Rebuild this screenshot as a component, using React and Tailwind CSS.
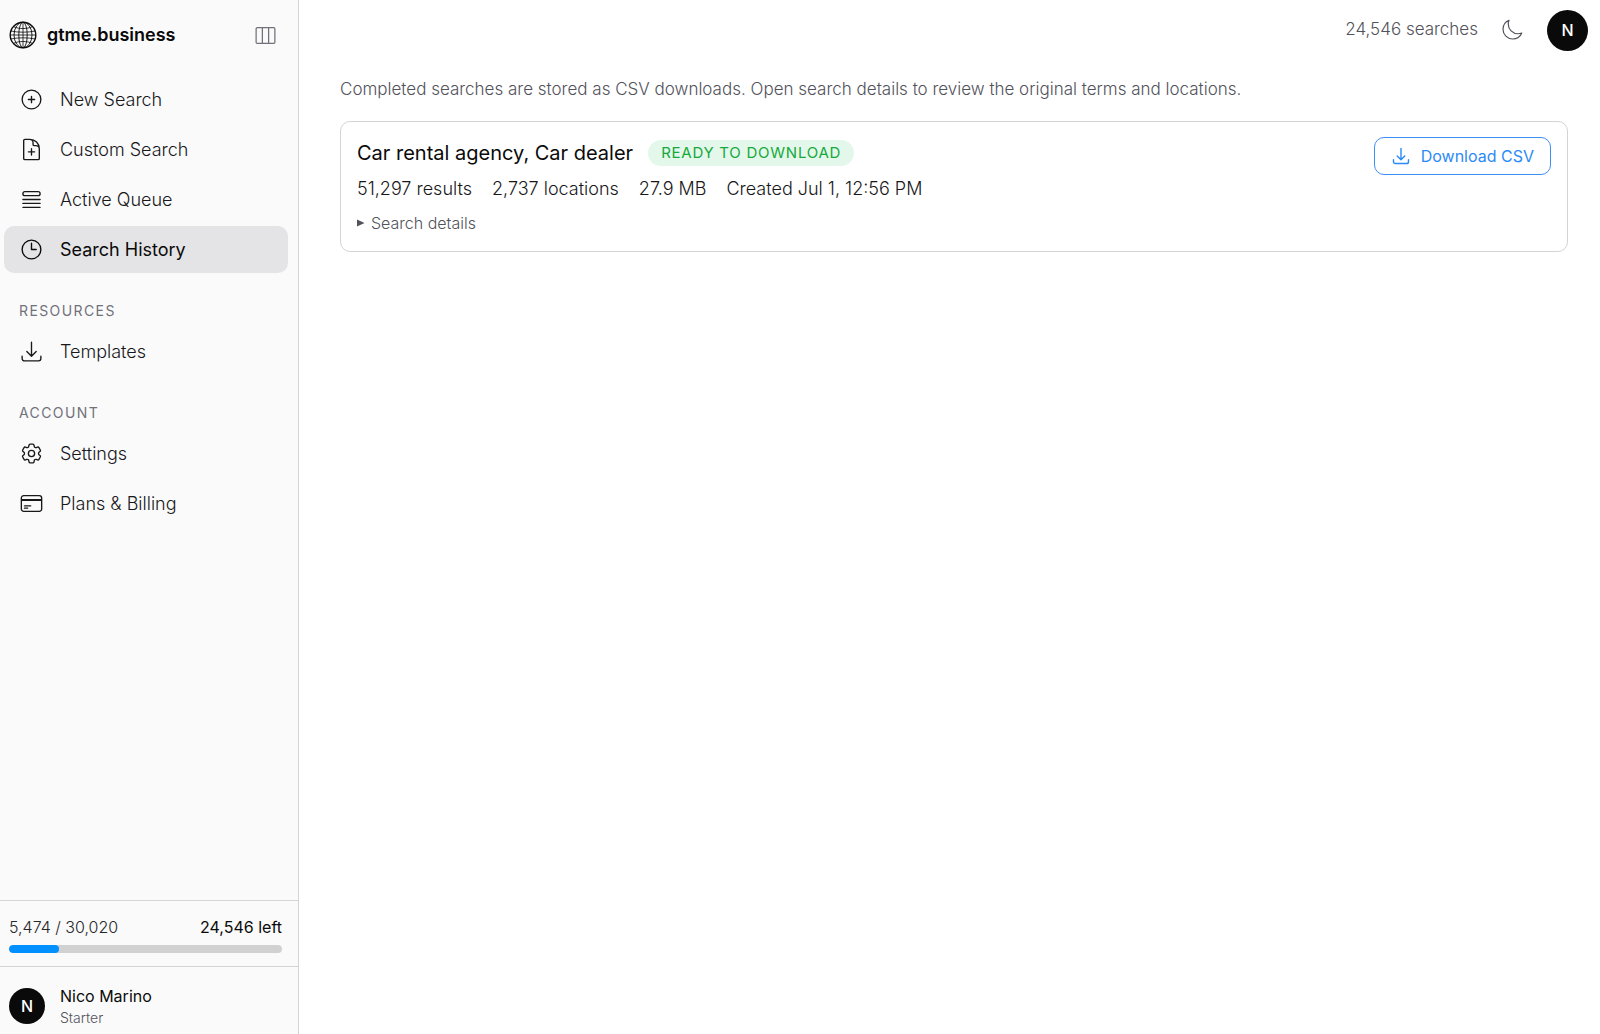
import { useState } from 'react'
import {
  HiOutlineArrowDownTray,
  HiOutlineClock,
  HiOutlineCog6Tooth,
  HiOutlineCreditCard,
  HiOutlineDocumentPlus,
  HiOutlineMoon,
  HiOutlinePlusCircle,
  HiOutlineQueueList,
  HiOutlineViewColumns,
} from 'react-icons/hi2'

const mainLinks = [
  { label: 'New Search', icon: HiOutlinePlusCircle },
  { label: 'Custom Search', icon: HiOutlineDocumentPlus },
  { label: 'Active Queue', icon: HiOutlineQueueList },
  { label: 'Search History', icon: HiOutlineClock },
]

const sections = [
  { title: 'Resources', links: [{ label: 'Templates', icon: HiOutlineArrowDownTray }] },
  {
    title: 'Account',
    links: [
      { label: 'Settings', icon: HiOutlineCog6Tooth },
      { label: 'Plans & Billing', icon: HiOutlineCreditCard },
    ],
  },
]

const usage = { used: 5474, total: 30020 }

const searches = [
  {
    id: 1,
    title: 'Car rental agency, Car dealer',
    status: 'Ready to download',
    meta: ['51,297 results', '2,737 locations', '27.9 MB', 'Created Jul 1, 12:56 PM'],
    terms: 'Car rental agency, Car dealer',
  },
]

function Globe() {
  return (
    <svg viewBox="0 0 28 28" className="size-7" fill="none" stroke="currentColor" aria-hidden="true">
      <circle cx="14" cy="14" r="12.8" strokeWidth="1.4" />
      <ellipse cx="14" cy="14" rx="9" ry="12.8" strokeWidth="0.9" />
      <ellipse cx="14" cy="14" rx="4.2" ry="12.8" strokeWidth="0.9" />
      <path
        d="M14 1.2v25.6M1.2 14h25.6M4.4 5.6c5.6 2.6 13.6 2.6 19.2 0M4.4 22.4c5.6-2.6 13.6-2.6 19.2 0M1.8 10c7.4 1.6 17 1.6 24.4 0M1.8 18c7.4-1.6 17-1.6 24.4 0"
        strokeWidth="0.8"
      />
    </svg>
  )
}

function NavLink({ label, icon: Icon, active, onSelect }) {
  return (
    <a
      href="#"
      onClick={(e) => {
        e.preventDefault()
        onSelect(label)
      }}
      aria-current={active ? 'page' : undefined}
      className={`flex h-[47px] items-center gap-4 rounded-[10px] px-[15px] text-lg ${
        active ? 'bg-[#e4e4e7] text-[#0a0a0a]' : 'font-light text-[#18181b] hover:bg-zinc-100'
      }`}
    >
      <Icon className="size-[25px] shrink-0 stroke-[1.3]" />
      {label}
    </a>
  )
}

function Avatar({ className }) {
  return (
    <span
      className={`flex shrink-0 items-center justify-center rounded-full bg-[#0a0a0a] font-medium text-white ${className}`}
    >
      N
    </span>
  )
}

function Sidebar({ current, onSelect }) {
  return (
    <aside className="flex w-[299px] shrink-0 flex-col border-r border-[#d4d4d4] bg-[#fafafa]">
      <div className="flex h-[70px] items-center justify-between pl-[9px] pr-5">
        <a href="#" className="flex items-center gap-[10px] text-lg font-semibold text-[#0a0a0a]">
          <Globe />
          gtme.business
        </a>
        <button type="button" aria-label="Toggle sidebar" className="text-[#71717a]">
          <HiOutlineViewColumns className="size-[25px] stroke-[1.2]" />
        </button>
      </div>

      <nav className="flex flex-1 flex-col pl-1 pr-[10px] pt-[6px]">
        <div className="flex flex-col gap-[3px]">
          {mainLinks.map((link) => (
            <NavLink key={link.label} {...link} active={link.label === current} onSelect={onSelect} />
          ))}
        </div>
        {sections.map((section) => (
          <div key={section.title} className="flex flex-col gap-[3px] pt-7">
            <h2 className="px-[15px] pb-1 text-sm leading-5 tracking-widest text-[#71717a] uppercase">
              {section.title}
            </h2>
            {section.links.map((link) => (
              <NavLink key={link.label} {...link} active={link.label === current} onSelect={onSelect} />
            ))}
          </div>
        ))}
      </nav>

      {/* Usage */}
      <div className="border-t border-[#d4d4d4] px-[9px] pt-[14px] pb-[13px] pr-4">
        <div className="flex justify-between text-base leading-6">
          <span className="font-light text-[#27272a]">
            {usage.used.toLocaleString('en-US')} / {usage.total.toLocaleString('en-US')}
          </span>
          <span className="text-[#0a0a0a]">{(usage.total - usage.used).toLocaleString('en-US')} left</span>
        </div>
        <div className="mt-[6px] h-2 overflow-hidden rounded-full bg-[#d1d1d1]">
          <div
            className="h-full rounded-full bg-[#0090ff]"
            style={{ width: `${(usage.used / usage.total) * 100}%` }}
          />
        </div>
      </div>

      {/* Account */}
      <div className="flex items-center gap-[15px] border-t border-[#d4d4d4] px-[9px] pt-[17px] pb-[6px]">
        <Avatar className="size-9 text-base" />
        <div>
          <p className="text-base leading-6 text-[#0a0a0a]">Nico Marino</p>
          <p className="text-sm leading-5 font-light text-[#52525b]">Starter</p>
        </div>
      </div>
    </aside>
  )
}

function SearchCard({ search }) {
  return (
    <article className="flex items-start justify-between rounded-[10px] border border-[#d4d4d4] p-4 pt-[15px]">
      <div>
        <div className="flex items-center gap-[15px]">
          <h2 className="text-xl leading-8 text-[#0a0a0a]">{search.title}</h2>
          <span className="rounded-full bg-[#e3f8ea] px-[13px] text-[15px] leading-[26px] tracking-wider text-[#16a83c] uppercase">
            {search.status}
          </span>
        </div>
        <div className="mt-2 flex gap-5 text-lg leading-6 font-light text-[#18181b]">
          {search.meta.map((item) => (
            <span key={item}>{item}</span>
          ))}
        </div>
        <details className="group mt-[10px] text-base leading-6 font-light text-[#52525b]">
          <summary className="flex cursor-pointer list-none items-center gap-[6px]">
            <svg viewBox="0 0 8 8" className="size-2 group-open:rotate-90" fill="currentColor" aria-hidden="true">
              <path d="M0 0.5 7.5 4 0 7.5z" />
            </svg>
            Search details
          </summary>
          <p className="mt-2">{search.terms}</p>
        </details>
      </div>
      <button
        type="button"
        className="flex h-[38px] items-center gap-[10px] rounded-[10px] border border-[#3b8ff5] px-4 text-base text-[#2b8af7]"
      >
        <HiOutlineArrowDownTray className="size-5 stroke-[1.7]" />
        Download CSV
      </button>
    </article>
  )
}

export default function App() {
  const [current, setCurrent] = useState('Search History')

  return (
    <div className="flex min-h-screen bg-white font-['Inter',sans-serif]">
      <Sidebar current={current} onSelect={setCurrent} />

      <div className="flex min-w-0 flex-1 flex-col">
        <header className="flex h-[60px] items-center justify-end pr-3">
          <span className="text-[17px] font-light text-[#52525b]">24,546 searches</span>
          <button type="button" aria-label="Toggle theme" className="ml-[22px] text-[#52525b]">
            <HiOutlineMoon className="size-6 stroke-[1.2]" />
          </button>
          <button type="button" aria-label="Account menu" className="ml-[23px]">
            <Avatar className="size-[41px] text-base" />
          </button>
        </header>

        <main className="flex flex-col gap-5 pt-[17px] pr-8 pl-[41px]">
          <p className="text-[17px] leading-6 font-light text-[#52525b]">
            Completed searches are stored as CSV downloads. Open search details to review the original terms and
            locations.
          </p>
          {searches.map((search) => (
            <SearchCard key={search.id} search={search} />
          ))}
        </main>
      </div>
    </div>
  )
}
